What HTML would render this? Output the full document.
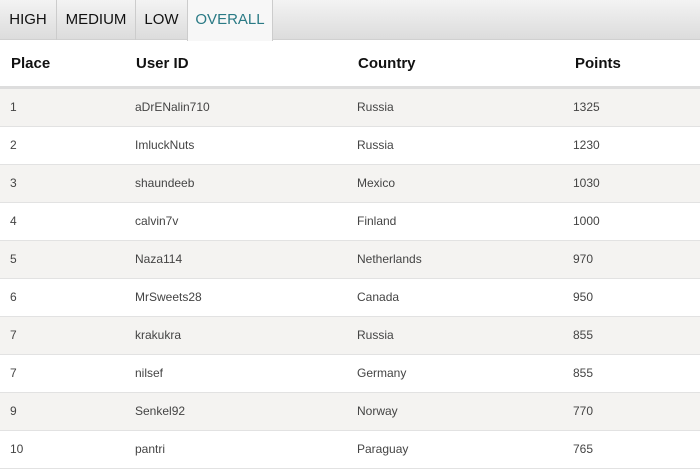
<!DOCTYPE html>
<html><head><style>
body{margin:0;width:700px;height:468px;overflow:hidden;background:#fff;font-family:"Liberation Sans",sans-serif}
.tabs{height:40px;background:linear-gradient(#f3f3f3,#dcdcdc);border-bottom:1px solid #d0d0d0;box-sizing:border-box;position:relative}
.tab{position:absolute;top:0;height:40px;line-height:40px;font-size:15px;color:#111;text-align:center;border-right:1px solid #ccc;box-sizing:border-box}
.tab.on{background:#f7f7f7;color:#2a7a85;border-left:1px solid #ccc;height:41px}
.hd{height:46px;position:relative;border-bottom:3px solid #ddd;font-weight:bold;font-size:15px;color:#111}
.row{height:37px;border-bottom:1px solid #e2e2e2;position:relative;font-size:12px;color:#444}
.row:nth-child(odd){background:#f4f3f1}
.c{position:absolute;top:0;line-height:37px}
.hd .c{line-height:48px}
</style></head><body>
<div class="tabs">
<div class="tab" style="left:0;width:57px">HIGH</div>
<div class="tab" style="left:57px;width:79px">MEDIUM</div>
<div class="tab" style="left:136px;width:52px">LOW</div>
<div class="tab on" style="left:187px;width:86px">OVERALL</div>
</div>
<div class="hd"><span class="c" style="left:11px">Place</span><span class="c" style="left:136px">User ID</span><span class="c" style="left:358px">Country</span><span class="c" style="left:575px">Points</span></div>
<div>
<div class="row"><span class="c" style="left:10px">1</span><span class="c" style="left:135px">aDrENalin710</span><span class="c" style="left:357px">Russia</span><span class="c" style="left:573px">1325</span></div>
<div class="row"><span class="c" style="left:10px">2</span><span class="c" style="left:135px">ImluckNuts</span><span class="c" style="left:357px">Russia</span><span class="c" style="left:573px">1230</span></div>
<div class="row"><span class="c" style="left:10px">3</span><span class="c" style="left:135px">shaundeeb</span><span class="c" style="left:357px">Mexico</span><span class="c" style="left:573px">1030</span></div>
<div class="row"><span class="c" style="left:10px">4</span><span class="c" style="left:135px">calvin7v</span><span class="c" style="left:357px">Finland</span><span class="c" style="left:573px">1000</span></div>
<div class="row"><span class="c" style="left:10px">5</span><span class="c" style="left:135px">Naza114</span><span class="c" style="left:357px">Netherlands</span><span class="c" style="left:573px">970</span></div>
<div class="row"><span class="c" style="left:10px">6</span><span class="c" style="left:135px">MrSweets28</span><span class="c" style="left:357px">Canada</span><span class="c" style="left:573px">950</span></div>
<div class="row"><span class="c" style="left:10px">7</span><span class="c" style="left:135px">krakukra</span><span class="c" style="left:357px">Russia</span><span class="c" style="left:573px">855</span></div>
<div class="row"><span class="c" style="left:10px">7</span><span class="c" style="left:135px">nilsef</span><span class="c" style="left:357px">Germany</span><span class="c" style="left:573px">855</span></div>
<div class="row"><span class="c" style="left:10px">9</span><span class="c" style="left:135px">Senkel92</span><span class="c" style="left:357px">Norway</span><span class="c" style="left:573px">770</span></div>
<div class="row"><span class="c" style="left:10px">10</span><span class="c" style="left:135px">pantri</span><span class="c" style="left:357px">Paraguay</span><span class="c" style="left:573px">765</span></div>
</div>
</body></html>
